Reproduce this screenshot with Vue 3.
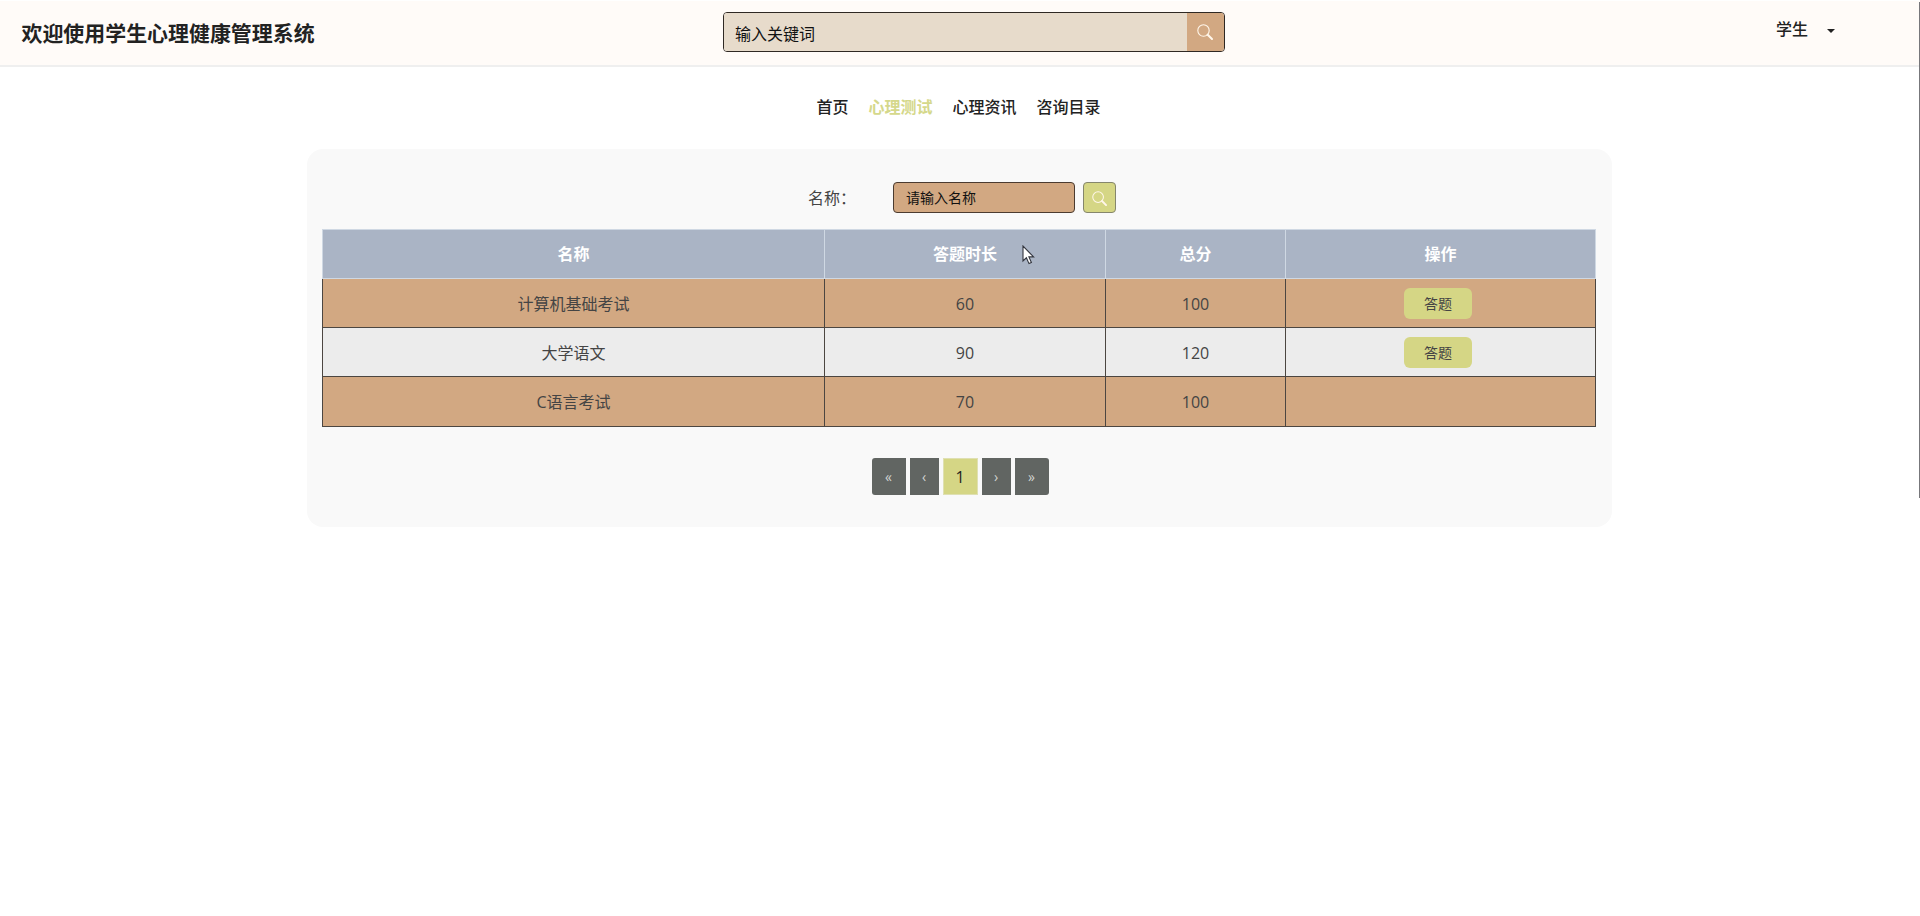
<script setup>
import { ref } from 'vue'

const navList = ['首页', '心理测试', '心理资讯', '咨询目录']
const active = ref('心理测试')
const keyword = ref('')
const name = ref('')

const list = [
    { name: '计算机基础考试', time: 60, score: 100, canAnswer: true },
    { name: '大学语文', time: 90, score: 120, canAnswer: true },
    { name: 'C语言考试', time: 70, score: 100, canAnswer: false }
]
</script>

<template>
    <div class="page">
        <header class="header">
            <h1 class="title">欢迎使用学生心理健康管理系统</h1>
            <div class="search">
                <input v-model="keyword" type="text" placeholder="输入关键词">
                <button class="search-btn">
                    <svg viewBox="0 0 16 16" width="16" height="16">
                        <circle cx="6.5" cy="6.5" r="5.7" />
                        <path d="M10.7 10.7L15 15" class="handle" />
                    </svg>
                </button>
            </div>
            <div class="user">
                <span>学生</span>
                <i class="caret"></i>
            </div>
        </header>

        <nav class="nav">
            <a v-for="item in navList" :key="item" :class="{ active: item === active }" @click="active = item">{{ item }}</a>
        </nav>

        <main class="card">
            <div class="form">
                <label>名称：</label>
                <input v-model="name" type="text" placeholder="请输入名称">
                <button class="form-btn">
                    <svg viewBox="0 0 16 16" width="15" height="15">
                        <circle cx="6.5" cy="6.5" r="5.7" />
                        <path d="M10.7 10.7L15 15" class="handle" />
                    </svg>
                </button>
            </div>

            <table class="table">
                <colgroup>
                    <col class="col-name">
                    <col class="col-time">
                    <col class="col-score">
                    <col>
                </colgroup>
                <thead>
                    <tr>
                        <th>名称</th>
                        <th>答题时长</th>
                        <th>总分</th>
                        <th>操作</th>
                    </tr>
                </thead>
                <tbody>
                    <tr v-for="row in list" :key="row.name">
                        <td>{{ row.name }}</td>
                        <td>{{ row.time }}</td>
                        <td>{{ row.score }}</td>
                        <td class="action">
                            <button v-if="row.canAnswer" class="answer">答题</button>
                        </td>
                    </tr>
                </tbody>
            </table>

            <div class="pagination">
                <button class="first">«</button>
                <button class="step">‹</button>
                <button class="current">1</button>
                <button class="step">›</button>
                <button class="last">»</button>
            </div>
        </main>

        <div class="scroll-line"></div>
        <svg class="cursor" viewBox="0 0 13 20" width="13" height="20">
            <path d="M1 1V16L4.4 12.8L7 18.6L9.4 17.5L6.9 11.9H11.6Z" />
        </svg>
    </div>
</template>

<style>
body {
    margin: 0;
    background: #fff;
}
</style>

<style scoped>
.page {
    position: relative;
    min-height: 916px;
    overflow: hidden;
    font-family: "Open Sans", "Noto Sans CJK SC", sans-serif;
    font-size: 16px;
    color: #444;
}

* {
    box-sizing: border-box;
}

input,
button {
    font-family: inherit;
    padding: 0;
    margin: 0;
    outline: none;
}

input::placeholder {
    color: #111;
    opacity: 1;
}

svg {
    display: block;
    fill: none;
    stroke: #fff6ea;
    stroke-width: 1.1;
}

.handle {
    stroke-width: 2;
    stroke-linecap: round;
}

.header {
    display: grid;
    grid-template-columns: 723px 502px 1fr;
    height: 67px;
    border-top: 1px solid #fff;
    border-bottom: 2px solid #efefef;
    background: #fffbf8;
}

.title {
    margin: 0;
    padding-left: 21.5px;
    font-size: 20.95px;
    line-height: 65px;
    font-weight: 700;
    color: #222;
}

.search {
    display: flex;
    height: 40px;
    margin-top: 11px;
    border: 1px solid #2f2823;
    border-radius: 4px;
    overflow: hidden;
}

.search input {
    flex: 1;
    min-width: 0;
    padding: 3px 11px 0;
    border: 0;
    font-size: 16px;
    background: #e7dbcb;
}

.search-btn {
    display: flex;
    justify-content: center;
    align-items: center;
    width: 37px;
    padding-right: 2px;
    border: 0;
    background: #d2a882;
}

.user {
    display: flex;
    justify-content: flex-end;
    align-items: center;
    gap: 19px;
    height: 54px;
    padding-right: 85px;
    font-weight: 500;
    color: #222;
}

.caret {
    margin-top: 6px;
    border: 4px solid transparent;
    border-top-color: #222;
    border-bottom: 0;
}

.nav {
    display: flex;
    justify-content: center;
    gap: 20px;
    height: 82px;
    padding-right: 3px;
    line-height: 81px;
    font-weight: 500;
    color: #222;
}

.nav .active {
    font-weight: 700;
    color: #d5d88b;
}

.card {
    width: 1305px;
    height: 378px;
    margin-left: 307px;
    padding: 33px 16px 0;
    border-radius: 16px;
    background: #f9f9f9;
}

.form {
    display: flex;
    align-items: center;
    height: 31px;
    padding-left: 485px;
}

.form label {
    width: 85px;
    padding-bottom: 2px;
}

.form input {
    width: 182px;
    height: 31px;
    padding: 0 12px;
    border: 1px solid #4b3b30;
    border-radius: 4px;
    font-size: 14px;
    background: #d2a882;
}

.form-btn {
    display: flex;
    justify-content: center;
    align-items: center;
    width: 33px;
    height: 31px;
    margin-left: 8px;
    padding-top: 2px;
    border: 1px solid #85866c;
    border-radius: 4px;
    background: #d5d685;
}

.table {
    width: 1274px;
    margin-top: 16px;
    margin-left: -1px;
    border-collapse: collapse;
    table-layout: fixed;
    text-align: center;
}

.col-name {
    width: 502px;
}

.col-time {
    width: 281px;
}

.col-score {
    width: 180px;
}

.table th,
.table td {
    height: 49px;
    padding: 0;
    border: 1px solid #4c4641;
    line-height: 24px;
}

.table th {
    border-color: #cfd8e3;
    color: #fff;
    background: #aab4c5;
}

.table td {
    padding-top: 1px;
    background: #d2a882;
}

.table tr:last-child td {
    height: 50px;
}

.table tr:nth-child(even) td {
    background: #ececec;
}

.table .action {
    padding-top: 0;
    padding-right: 5px;
}

.answer {
    display: block;
    width: 68px;
    height: 31px;
    margin: 0 auto;
    border: 0;
    border-radius: 6px;
    font-size: 14px;
    color: #444;
    background: #d5d685;
}

.pagination {
    display: flex;
    justify-content: center;
    gap: 4px;
    margin-top: 31px;
    padding-left: 1px;
}

.pagination button {
    height: 37px;
    border: 0;
    font-size: 14px;
    color: #d0d3d0;
    background: #616562;
}

.pagination .first {
    width: 34px;
    border-radius: 3px 0 0 3px;
}

.pagination .last {
    width: 34px;
    border-radius: 0 3px 3px 0;
}

.pagination .step {
    width: 29px;
}

.pagination .current {
    width: 35px;
    border: 1px solid #dfe0b2;
    font-size: 16px;
    color: #222;
    background: #d5d685;
}

.scroll-line {
    position: absolute;
    top: 2px;
    right: 0;
    width: 1px;
    height: 496px;
    background: #77777b;
}

.cursor {
    position: absolute;
    left: 1022px;
    top: 245px;
    fill: #fff;
    stroke: #33363f;
}
</style>
